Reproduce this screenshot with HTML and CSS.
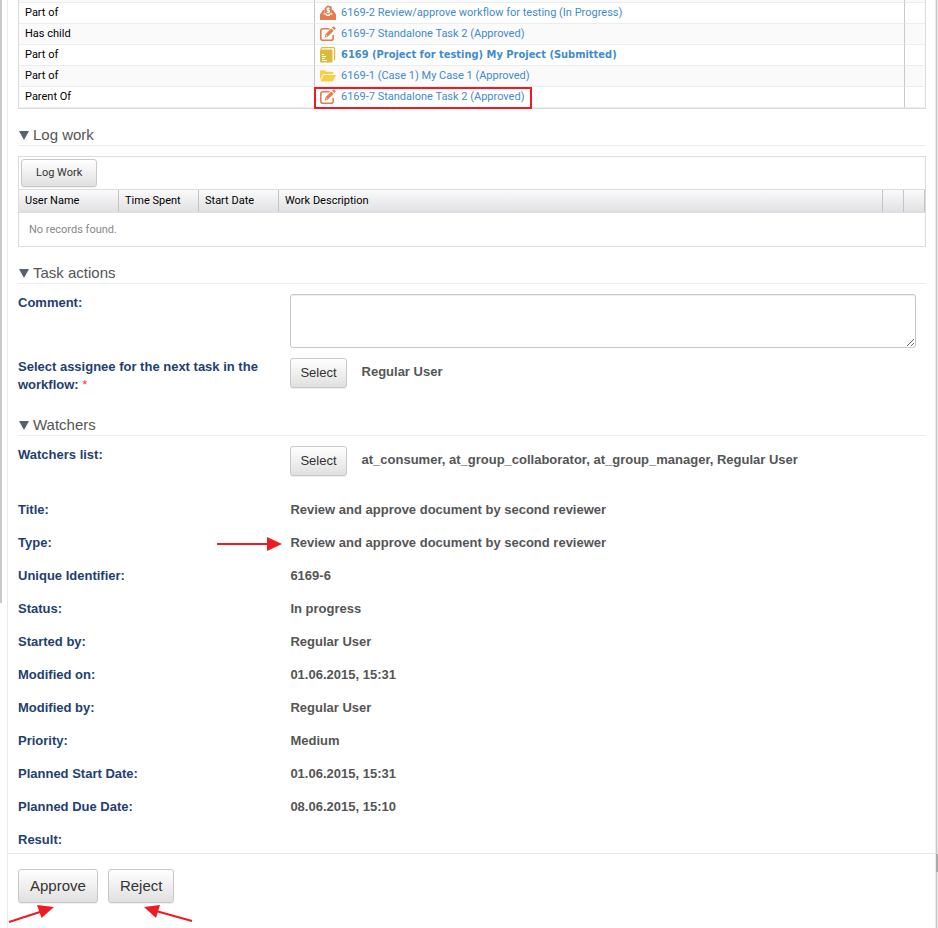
FILE: index.html
```html
<!DOCTYPE html>
<html lang="en">
<head>
<meta charset="utf-8">
<meta name="viewport" content="width=device-width, initial-scale=1">
<title>Review and approve document by second reviewer</title>
<link rel="stylesheet" href="styles.css">
</head>
<body>
<svg class="sprite" aria-hidden="true">
  <symbol id="i-workflow" viewBox="0 0 16 16">
    <path fill="#e57c4b" d="M0 15V9.500L3 5h1.500v2L3.200 9.500H5.500L6.500 11h3l1-1.500h2.300L11.500 7V5H13l3 4.500V15z"/>
    <path fill="#e57c4b" d="M4.500 3.200 7.500.5l4.300 1v6.800H10l-.8 1.200H6.800L6 8.300H4.500z"/>
    <path fill="none" stroke="#fff" d="M9.800 3.300H7v2h2.500v2H6.500M8.200 2.300v6"/>
  </symbol>
  <symbol id="i-task" viewBox="0 0 16 16">
    <path fill="none" stroke="#e57c4b" stroke-width="1.600" d="M9.500 2.800H2.800q-2 0-2 2v7.400q0 2 2 2h8.400q2 0 2-2V9"/>
    <path fill="#e57c4b" d="m5.500 8.200 5.800-5.800 2.400 2.400-5.800 5.800-3.200.9zM12 1.700l1-1q.6-.5 1.200 0l1.200 1.200q.5.600 0 1.200l-1 1z"/>
    <path fill="#fff" d="m6.200 8.700 1.200 1.200-1.300.3z"/>
  </symbol>
  <symbol id="i-project" viewBox="0 0 16 16">
    <path fill="none" stroke="#e0b93a" stroke-width="1.200" d="M1 2.600V2q0-1.400 1.400-1.400h11q1.200 0 1.200 1.200V13"/>
    <rect fill="#e0b93a" y="2.500" width="12.500" height="13" rx="1"/>
    <path fill="none" stroke="#fff" d="M2 7.500h2M2 9.500h4M2 11.500h3M2 13.500h5"/>
  </symbol>
  <symbol id="i-case" viewBox="0 0 16 16">
    <path fill="#fbcf42" d="M0 12V3.200q0-1 1-1h4l1.200 1.500h6q1 0 1 1V6H4.200q-1 0-1.500.8z"/>
    <path fill="#fbcf42" d="M.5 13.500 3.200 7.800q.4-.9 1.300-.9H16l-2.700 5.700q-.4.900-1.300.9z"/>
  </symbol>
</svg>
<div class="rail"></div>
<main class="panel">
  <div class="content">
    <table class="relations" aria-label="Related objects">
      <colgroup><col class="c-kind"><col><col class="c-end"></colgroup>
      <tbody>
        <tr class="cut"><td></td><td></td><td></td></tr>
        <tr><td>Part of</td><td><a href="#"><svg class="icon"><use href="#i-workflow"/></svg>6169-2 Review/approve workflow for testing (In Progress)</a></td><td></td></tr>
        <tr><td>Has child</td><td><a href="#"><svg class="icon"><use href="#i-task"/></svg>6169-7 Standalone Task 2 (Approved)</a></td><td></td></tr>
        <tr><td>Part of</td><td><a class="strong" href="#"><svg class="icon"><use href="#i-project"/></svg>6169 (Project for testing) My Project (Submitted)</a></td><td></td></tr>
        <tr><td>Part of</td><td><a href="#"><svg class="icon"><use href="#i-case"/></svg>6169-1 (Case 1) My Case 1 (Approved)</a></td><td></td></tr>
        <tr><td>Parent Of</td><td><a class="marked" href="#"><svg class="icon"><use href="#i-task"/></svg>6169-7 Standalone Task 2 (Approved)</a></td><td></td></tr>
      </tbody>
    </table>

    <h2><i class="tri"></i>Log work</h2>
    <section class="log">
      <div class="toolbar"><button class="btn small" type="button">Log Work</button></div>
      <table aria-label="Log work">
        <colgroup><col class="c-user"><col class="c-mid"><col class="c-mid"><col><col class="c-end"><col class="c-end"></colgroup>
        <thead><tr><th>User Name</th><th>Time Spent</th><th>Start Date</th><th>Work Description</th><th></th><th></th></tr></thead>
        <tbody><tr><td colspan="6">No records found.</td></tr></tbody>
      </table>
    </section>

    <h2><i class="tri"></i>Task actions</h2>
    <div class="row comment"><label for="comment">Comment:</label><textarea id="comment"></textarea></div>
    <div class="row assignee">
      <label for="assignee">Select assignee for the next task in the workflow: <span class="req">*</span></label>
      <div class="picker"><button class="btn" id="assignee" type="button">Select</button><span>Regular User</span></div>
    </div>

    <h2><i class="tri"></i>Watchers</h2>
    <div class="row watchers">
      <label for="watchers">Watchers list:</label>
      <div class="picker"><button class="btn" id="watchers" type="button">Select</button><span>at_consumer, at_group_collaborator, at_group_manager, Regular User</span></div>
    </div>

    <dl>
      <div class="row"><dt>Title:</dt><dd>Review and approve document by second reviewer</dd></div>
      <div class="row"><dt>Type:</dt><dd>Review and approve document by second reviewer
        <svg class="arrow type-arrow" viewBox="0 0 66 16" aria-hidden="true"><path stroke="#ed1c24" stroke-width="2" d="M0 8h52"/><path fill="#ed1c24" d="M50 1v14l15-7z"/></svg></dd></div>
      <div class="row"><dt>Unique Identifier:</dt><dd>6169-6</dd></div>
      <div class="row"><dt>Status:</dt><dd>In progress</dd></div>
      <div class="row"><dt>Started by:</dt><dd>Regular User</dd></div>
      <div class="row"><dt>Modified on:</dt><dd>01.06.2015, 15:31</dd></div>
      <div class="row"><dt>Modified by:</dt><dd>Regular User</dd></div>
      <div class="row"><dt>Priority:</dt><dd>Medium</dd></div>
      <div class="row"><dt>Planned Start Date:</dt><dd>01.06.2015, 15:31</dd></div>
      <div class="row"><dt>Planned Due Date:</dt><dd>08.06.2015, 15:10</dd></div>
      <div class="row"><dt>Result:</dt><dd></dd></div>
    </dl>
  </div>
  <footer>
    <div class="action"><button class="btn large" type="button">Approve</button>
      <svg class="arrow approve-arrow" viewBox="0 0 46 20" aria-hidden="true"><path stroke="#ed1c24" stroke-width="2" d="M0 18 34 7"/><path fill="#ed1c24" d="m28 1 4.500 13L45 3z"/></svg></div>
    <div class="action"><button class="btn large" type="button">Reject</button>
      <svg class="arrow reject-arrow" viewBox="0 0 48 20" aria-hidden="true"><path stroke="#ed1c24" stroke-width="2" d="M48 17 12 7"/><path fill="#ed1c24" d="M16 1 12 14 0 3z"/></svg></div>
  </footer>
</main>
</body>
</html>
```

FILE: styles.css
```css
* { box-sizing: border-box; }
body {
  margin: 0;
  display: flex;
  min-height: 100vh;
  background: #fff;
  color: #555;
  font: 13px/18px "Liberation Sans", Arial, sans-serif;
}
.sprite { position: absolute; width: 0; height: 0; }
.rail { width: 2px; height: 65vh; background: #c8c8c8; }
.panel {
  flex: 1;
  min-width: 0;
  margin: 0 1px 0 5px;
  border-left: 1px solid #ececec;
  border-right: 1px solid #c8c8c8;
  box-shadow: inset -1px 0 #ececec, 1px 0 #e6e6e6;
}
.content { padding: 0 10px 4px; }

table { width: 100%; border-collapse: separate; border-spacing: 0; table-layout: fixed; }
.relations, .log {
  font: 11px/14px Roboto, "Noto Sans", sans-serif;
  color: #000;
  border: 1px solid #dcdcdc;
}
.relations { border-top: 0; }
.relations td {
  height: 21px;
  padding: 0 6px;
  border-bottom: 1px solid #ececec;
  white-space: nowrap;
}
.relations td + td { border-left: 1px solid #c8c8c8; padding-left: 5px; }
.relations tr:nth-child(odd) td { background: #fafafa; }
.relations .cut td { height: 3px; }
.c-kind { width: 295px; }
.c-end { width: 21px; }
.c-user { width: 100px; }
.c-mid { width: 80px; }

a { position: relative; display: flex; width: max-content; height: 20px; align-items: center; gap: 5px; color: #428bca; text-decoration: none; }
.icon { width: 16px; height: 16px; }
.strong { font: bold 11px/14px "DejaVu Sans Condensed", "DejaVu Sans", sans-serif; }
.marked::after { content: ""; position: absolute; inset: 0 -7px -2px -6px; border: 2px solid #ed1c24; }

h2 {
  display: flex;
  align-items: center;
  gap: 4px;
  margin: 16px 0 0;
  border-bottom: 1px solid #ececec;
  font-size: 15px;
  line-height: 20px;
  font-weight: normal;
}
.tri { margin-left: 1px; border: 5px solid transparent; border-top: 9px solid #56616c; border-bottom: 0; }

.btn {
  height: 30px;
  padding: 0 9px;
  border: 1px solid #c8c8c8;
  border-radius: 3px;
  background: linear-gradient(#fff, #e0e0e0);
  box-shadow: 0 1px 1px #eee;
  color: #333;
  font: 13px/18px "Liberation Sans", Arial, sans-serif;
}
.small { height: 28px; padding: 0 14px; font: 11px/14px Roboto, "Noto Sans", sans-serif; }
.large { height: 34px; padding: 0 11px; font-size: 15px; }

.log { margin-top: 10px; }
.toolbar { display: flex; padding: 2px; }
.log th {
  height: 24px;
  padding: 0 6px;
  border: solid #dcdcdc;
  border-width: 1px 0;
  background: linear-gradient(#fafafa, #e0e1e4);
  font-weight: normal;
  text-align: left;
  box-shadow: inset -1px 0 #c4c4c4;
}
.log td { height: 33px; padding: 0 10px; color: #888; }

.row { display: grid; grid-template-columns: 30% 1fr; align-items: start; font-weight: bold; }
.row label, dt { color: #243f6e; }
.comment { margin-top: 10px; height: 64px; }
textarea { height: 54px; margin: 0 10px 0 0; border: 1px solid #c8c8c8; border-radius: 3px; box-shadow: inset 0 1px 1px #eee; resize: vertical; }
.assignee { min-height: 41px; }
.assignee label { padding-right: 20px; }
.req { color: #f33; font-weight: normal; }
.watchers { margin-top: 10px; min-height: 55px; }
.picker { display: flex; gap: 15px; }
.picker span { padding-top: 5px; }
dl { margin: 0; display: grid; gap: 15px; }
dd { position: relative; margin: 0; }

.arrow { position: absolute; overflow: visible; fill: none; }
.type-arrow { width: 66px; height: 16px; left: -73px; top: 2px; }
.approve-arrow { width: 46px; height: 20px; left: -9px; top: 35px; }
.reject-arrow { width: 48px; height: 20px; left: 36px; top: 35px; }

footer {
  position: relative;
  display: flex;
  gap: 10px;
  padding: 15px 10px 24px;
  border-top: 1px solid #e6e6e6;
}
footer::after { content: ""; position: absolute; right: -2px; top: 0; width: 2px; height: 18px; background: #aaa; }
.action { position: relative; }
```
